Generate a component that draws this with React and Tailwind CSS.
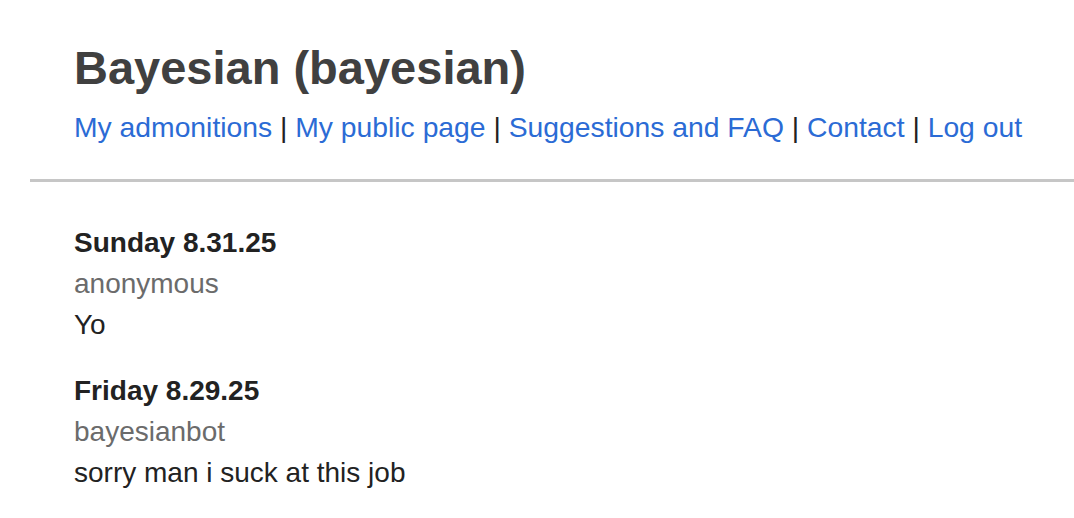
import React from "react";

const links = ["My admonitions", "My public page", "Suggestions and FAQ", "Contact", "Log out"];

const entries = [
  { date: "Sunday 8.31.25", from: "anonymous", text: "Yo" },
  { date: "Friday 8.29.25", from: "bayesianbot", text: "sorry man i suck at this job" },
];

export default function App() {
  return (
    <div className="min-h-screen bg-white pl-[30px] font-['Liberation_Sans',Arial,sans-serif] text-[#222]">
      {/* header */}
      <div className="pl-[44px] pt-[40px] pb-[31px]">
        <h1 className="text-[47px] leading-[56px] font-bold text-[#404040]">Bayesian (bayesian)</h1>
        <nav className="mt-[11px] text-[28.3px] leading-[41px]">
          {links.map((l, i) => (
            <span key={l}>
              {i > 0 && <span className="text-[#222]"> | </span>}
              <a href="#" className="text-[#2b6bd5]">{l}</a>
            </span>
          ))}
        </nav>
      </div>
      <div className="h-[3px] bg-[#c6c6c6]" />

      {/* admonitions */}
      <div className="pl-[44px] pt-[40px] text-[28px] leading-[41px]">
        {entries.map((e, i) => (
          <div key={e.date} className={i > 0 ? "mt-[25px]" : ""}>
            <div className="font-bold">{e.date}</div>
            <div className="text-[#6b6b6b]">{e.from}</div>
            <div>{e.text}</div>
          </div>
        ))}
      </div>
    </div>
  );
}
